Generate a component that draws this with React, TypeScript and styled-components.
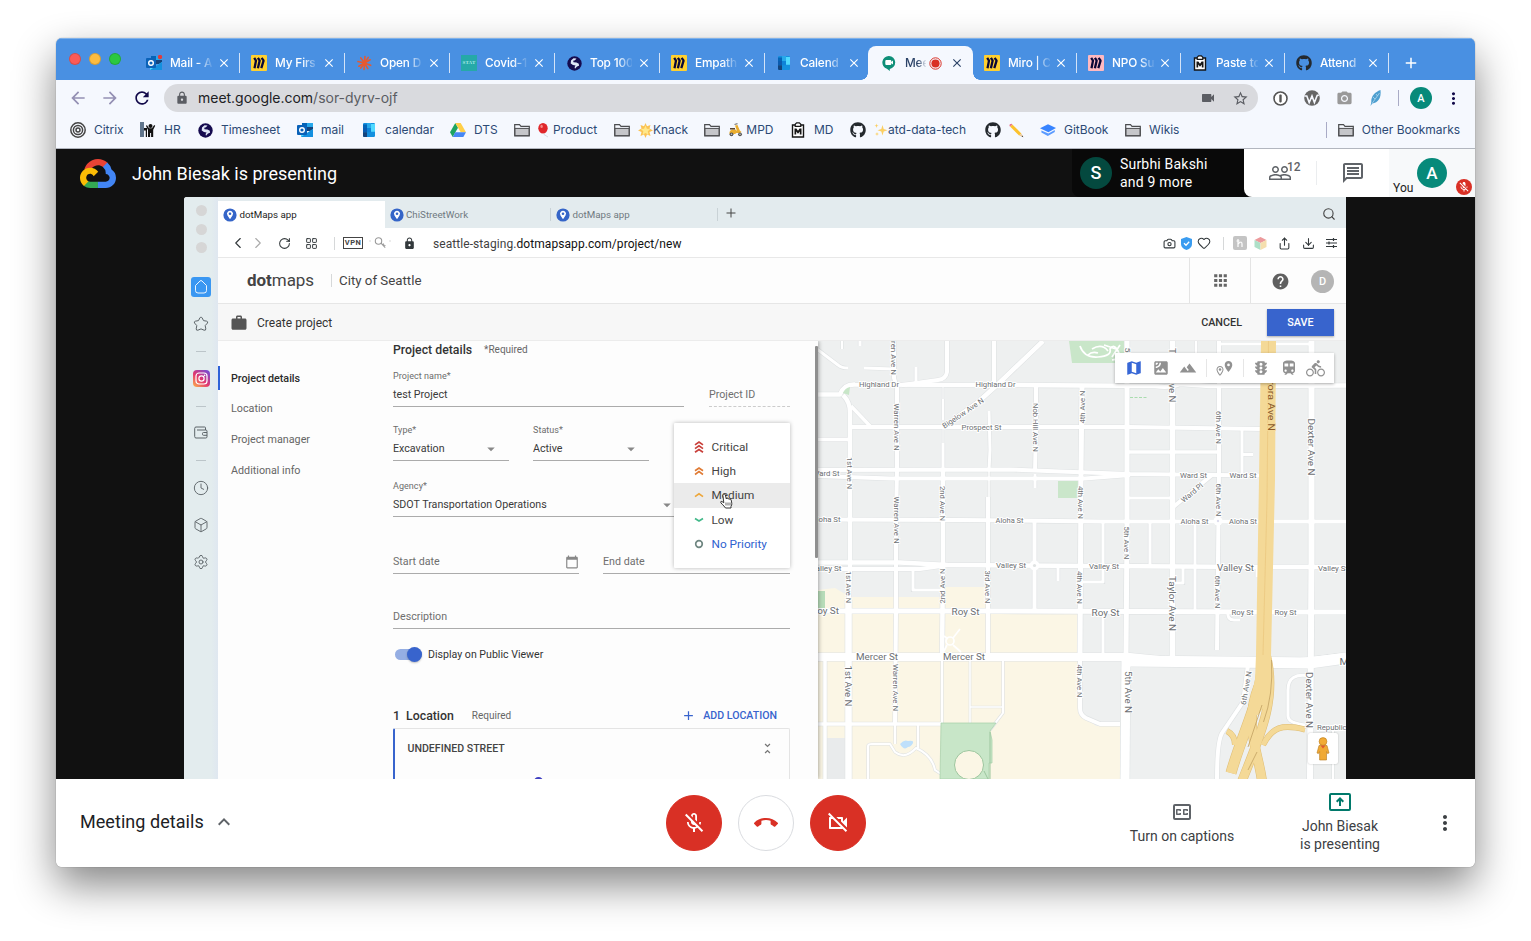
import React from "react";
import styled, { createGlobalStyle, css } from "styled-components";
import {
  MdMicOff, MdCallEnd, MdOutlineVideocamOff, MdOutlineMicOff, MdPeopleOutline, MdOutlineMessage,
  MdOutlineClosedCaption, MdLock, MdStarBorder, MdVideocam, MdHelp, MdApps, MdWork, MdMap,
  MdTerrain, MdSatellite, MdTraffic, MdTrain, MdDirectionsBike, MdArrowDropDown, MdAdd,
  MdUnfoldLess, MdCalendarToday, MdMoreVert, MdArrowBack, MdArrowForward, MdRefresh,
  MdExpandLess, MdClose, MdPhotoCamera, MdOutlineLocationOn, MdLocationOn,
} from "react-icons/md";
import { FaGithub } from "react-icons/fa";
import { Camera, Heart, Share, Download, Search, Plus, ChevronLeft, ChevronRight, RotateCw, LayoutGrid, Clock4, Box, Settings } from "lucide-react";

const Global = createGlobalStyle`
  *{box-sizing:border-box}
  html,body{margin:0;padding:0;background:#fff;overflow:hidden}
  svg{display:block;flex:none}
`;
const ui = `Inter, "Liberation Sans", sans-serif`;
const rb = `Roboto, "Liberation Sans", sans-serif`;

const Desktop = styled.main`width:1531px;height:941px;padding:38px 56px 0;background:#fff;overflow:hidden;`;
const Window = styled.section`
  width:1419px;height:829px;border-radius:6px;overflow:hidden;background:#fff;display:flex;flex-direction:column;
  box-shadow:0 0 1px rgba(0,0,0,.55),0 18px 42px rgba(0,0,0,.48);
`;

/* ---------- browser chrome ---------- */
const TabStrip = styled.header`height:42px;background:#4990e2;display:flex;border-top:1px solid #7fb1ea;font:500 12px/16px ${ui};color:#fff;`;
const Lights = styled.div`width:79px;padding:14px 0 0 13px;display:flex;gap:8px;`;
const Light = styled.i<{ $c: string }>`width:12px;height:12px;border-radius:50%;background:${p => p.$c};border:1px solid rgba(0,0,0,.15);`;
const TabBox = styled.div<{ $w: number; $active?: boolean; $line?: boolean }>`
  position:relative;width:${p => p.$w}px;height:41px;padding:7px 0 0 11px;display:flex;align-items:center;
  color:${p => (p.$active ? "#2c4368" : "#fff")};
  ${p => p.$line && css`&::after{content:"";position:absolute;right:0;top:14px;width:1px;height:20px;background:#d3e3f8;}`}
  ${p => p.$active && css`
    &::before{content:"";position:absolute;left:-2px;right:0;top:7px;bottom:0;background:#f5f8fe;border-radius:8px 8px 0 0;}
    &::after{content:"";position:absolute;left:-9px;right:-7px;bottom:0;height:7px;
      background:radial-gradient(circle at 0 0,transparent 6.5px,#f5f8fe 7px) left/7px 7px no-repeat,
      radial-gradient(circle at 100% 0,transparent 6.5px,#f5f8fe 7px) right/7px 7px no-repeat;}
  `}
  & > *{position:relative;z-index:1}
`;
const Fav = styled.span`width:16px;height:16px;display:flex;align-items:center;justify-content:center;flex:none;`;
const TabName = styled.span<{ $w: number }>`
  width:${p => p.$w}px;margin-left:8px;overflow:hidden;white-space:nowrap;font-size:11.8px;letter-spacing:-.15px;
  mask-image:linear-gradient(90deg,#000 ${p => (p.$w < 30 ? 60 : 66)}%,rgba(0,0,0,.1) 100%);
`;
const TabClose = styled(MdClose)`margin-left:auto;margin-right:9px;width:14px;height:14px;`;
const NewTab = styled(MdAdd)`width:18px;height:18px;margin:15px 0 0 13px;`;

const Toolbar = styled.div`height:36px;background:#f5f8fe;display:flex;align-items:center;padding:0 0 0 12px;color:#9490b4;`;
const NavIcon = styled.span<{ $c?: string }>`width:32px;display:flex;color:${p => p.$c || "#9490b4"};`;
const Omni = styled.div`
  width:1094px;height:28px;border-radius:14px;background:#d9dade;display:flex;align-items:center;padding:0 0 0 11px;
  font:400 14px/20px ${ui};color:#5b5d63;
`;
const Url = styled.span`margin-left:9px;letter-spacing:-.02px;flex:1;b{font-weight:400;color:#202124}`;
const Exts = styled.div`display:flex;align-items:center;margin-left:6px;color:#666;`;
const ExtSep = styled.i<{ $m?: string }>`width:1px;height:16px;background:#a9abc6;margin:${p => p.$m || "0"};`;
const Avatar = styled.span<{ $s: number; $c: string; $f: number }>`
  width:${p => p.$s}px;height:${p => p.$s}px;border-radius:50%;background:${p => p.$c};color:#fff;flex:none;
  display:flex;align-items:center;justify-content:center;font:500 ${p => p.$f}px/1 ${rb};
`;
const Bookmarks = styled.nav`height:33px;background:#f5f8fe;border-bottom:1px solid #b2b6bf;display:flex;align-items:center;padding:0 15px 4px 14px;font:400 12px/16px ${ui};color:#2c4a75;`;
const Bm = styled.span<{ $w?: number }>`width:${p => (p.$w ? p.$w + "px" : "auto")};display:flex;align-items:center;gap:8px;white-space:nowrap;`;
const BmText = styled.span`display:flex;align-items:center;letter-spacing:-.04px;`;
const BmOther = styled.div`margin-left:auto;display:flex;align-items:center;gap:11px;`;

const Miro = ({ bg = "#ffd02f" }: { bg?: string }) => (
  <svg width="16" height="16" viewBox="0 0 16 16"><rect width="16" height="16" rx="1" fill={bg} />
    <path d="M3.2 2.8L5 5.600 3.500 13.200M6.900 2.800L8.700 5.600 6.900 13.200M10.600 2.800L12.600 5.600 10.300 13.200" fill="none" stroke="#0a0838" strokeWidth="2.300" strokeLinejoin="bevel" /></svg>
);
const Outlook = ({ badge }: { badge?: boolean }) => (
  <svg width="17" height="16" viewBox="0 0 17 16"><path d="M5 1h11v8H5z" fill="#28a8ea" /><path d="M5 1h5v4H5z" fill="#0364b8" /><path d="M10 5h6v4h-6z" fill="#14447d" /><path d="M4 7l6 4 6-4v8H4z" fill="#50d9ff" /><path d="M4 15l12-8v8z" fill="#1490df" />
    <rect x="0" y="3" width="10" height="10" rx="1" fill="#0a62b8" /><circle cx="5" cy="8" r="2.300" fill="none" stroke="#fff" strokeWidth="1.400" />{badge && <circle cx="14" cy="2" r="2.200" fill="#e33b3b" />}</svg>
);
const Cal = () => (
  <svg width="12" height="14" viewBox="0 0 14 15" preserveAspectRatio="none"><rect width="14" height="15" rx="1.400" fill="#1490df" /><path d="M0 1.500h4.700v3.800H0z" fill="#0364b8" /><path d="M4.700 0h4.600v5.300H4.700z" fill="#28a8ea" /><path d="M9.300 1h4.700v8.500H9.300z" fill="#50d9ff" /><path d="M0 5.300h4.700v4.600H0z" fill="#0a5bb0" /><path d="M0 9.900h4.700V15H1.400Q0 15 0 13.600z" fill="#14447d" /><path d="M4.700 5.300h4.600v4.600H4.700z" fill="#0f83d8" /></svg>
);
const Globe = () => (
  <svg width="15" height="15" viewBox="0 0 15 15"><circle cx="7.500" cy="7.500" r="7.200" fill="#150b4f" /><path d="M4 4.500l2.500-2.300 3 .3L8 4.200l-1.800.6.3 1.400 3 .4 2.300 1.200.2 2-2 .8-2 2.200-.4-1.800 1-1.400-2.600-.6-2.300-1.600z" fill="#dfe6f7" /></svg>
);
const Clip = () => (
  <svg width="14" height="16" viewBox="0 0 14 16"><path d="M1.500 3h11v12H1.500z" fill="#fff" stroke="#151515" strokeWidth="1.400" /><path d="M4.200 4.400V2.300L5.600.9h2.800l1.400 1.400v2.100z" fill="#fff" stroke="#151515" strokeWidth="1.200" /><path d="M3.500 12.500V6.500h1.900L7 8.700l1.600-2.200h1.900v6H8.800V9.600L7 11.800 5.200 9.600v2.900z" fill="#151515" /></svg>
);
const Folder = () => (
  <svg width="16" height="14" viewBox="0 0 16 14"><path d="M.7 12.800V1.700h4.800L7 3.400h8.300v9.400z" fill="none" stroke="#4c4d50" strokeWidth="1.200" /><path d="M1 5.400h14v7.200H1z" fill="#c5c6ca" stroke="#4c4d50" strokeWidth="1" /></svg>
);
const Burst = () => (
  <svg width="15" height="16" viewBox="0 0 16 16" stroke="#e8592f" strokeWidth="1.700" strokeLinecap="round"><path d="M8.500 1L8 8 7.500 15M1 6.500L8 8l6.500 2.500M14 4.500L8 8 2 11.500M4 2.500L8 8l3.500 6M12 2L8 8 4 13.500" fill="none" /></svg>
);
const StatBox = styled.span`width:16px;height:16px;background:#25a9a8;color:#a5e8e5;font:700 5px/16px "Liberation Serif",serif;text-align:center;letter-spacing:.2px;`;
const MeetFav = () => (
  <svg width="14" height="15" viewBox="0 0 14 15"><path d="M7 0a6.500 6.500 0 0 1 .8 12.900V15L4.900 12.700A6.500 6.500 0 0 1 7 0z" fill="#0f8f78" /><rect x="3.300" y="4" width="6" height="5" rx="1" fill="#fff" /><path d="M9 6l2-1.600v4.200L9 7z" fill="#fff" /></svg>
);
const Rec = () => (
  <svg width="13" height="13" viewBox="0 0 13 13"><circle cx="6.500" cy="6.500" r="5.700" fill="none" stroke="#d93025" strokeWidth="1" /><circle cx="6.500" cy="6.500" r="4.100" fill="#d93025" /></svg>
);
const Citrix = () => (
  <svg width="16" height="16" viewBox="0 0 16 16" fill="none" stroke="#454545"><circle cx="8" cy="8" r="7.200" strokeWidth="1.500" /><circle cx="8" cy="8" r="4.600" strokeWidth="1.500" /><circle cx="8" cy="8" r="2" strokeWidth="1.500" /></svg>
);
const Hr = () => (
  <svg width="16" height="16" viewBox="0 0 16 16"><path d="M0 0h4v15H0z" fill="#60758c" /><path d="M4 6h3v9H5.800V8.500H4z" fill="#111" /><circle cx="10.500" cy="4" r="2" fill="#111" /><path d="M6.800 3l2.200 3.200h3L14.200 3l1 .8-2 4V15h-2.100v-4h-1v4H8V8L6 4z" fill="#111" /></svg>
);
const Drive = () => (
  <svg width="16" height="14" viewBox="0 0 16 14"><path d="M5.300 0L0 9.300 2.700 14 8 4.700z" fill="#1da462" /><path d="M5.300 0h5.400L16 9.300h-5.300z" fill="#ffcf48" /><path d="M5.300 9.300H16L13.300 14H2.700z" fill="#4687f4" /></svg>
);
const GitBook = () => (
  <svg width="16" height="13" viewBox="0 0 16 13"><path d="M0 4.300L8 .3l8 3.600-7.600 4.300z" fill="#3884ff" /><path d="M1.400 6.600v1.800l6.400 3.700 7-4V6l-6.400 3.500z" fill="#5b9bff" /></svg>
);
const Balloon = () => <svg width="15" height="15" viewBox="0 0 15 15"><ellipse cx="5" cy="5.300" rx="4.700" ry="5.300" fill="#e0272b" /><ellipse cx="3.600" cy="3.400" rx="1.200" ry="1.600" fill="#f58a87" /><path d="M5 10.500l1 1 4 2.500" stroke="#c9ccd4" strokeWidth=".7" fill="none" /></svg>;
const Glow = () => <svg width="15" height="15" viewBox="0 0 15 15"><path d="M7.500 0l1.500 3.300L12.500 2l-1 3.500 3.500 2-3.500 1.500 1 4-3.500-1.500L7.500 15 6 11.500 2.500 13l1-4L0 7.500l3.500-2-1-3.500L6 3.300z" fill="#fbc354" /><path d="M7.500 2.500l1.400 3.300 3.400.3-2.500 2.200.8 3.400-3.100-1.800-3 1.800.8-3.400L2.800 6.100l3.300-.3z" fill="#ffe88a" /></svg>;
const Scooter = () => <svg width="15" height="14" viewBox="0 0 15 14"><path d="M7 2.500l2.500-.5 2.300 5.500 1.700 1.500-1.500 1H8.500L7 11H1.500q-.5-3.500 2.500-4.500h3.500L9 8z" fill="#e9ad2f" /><path d="M2 5h5v1.600H2z" fill="#5a4634" /><path d="M6.500 1.500l3-.8" stroke="#777" strokeWidth="1.200" /><circle cx="3.500" cy="11.300" r="1.900" fill="#555" /><circle cx="12" cy="11.300" r="1.900" fill="#555" /><circle cx="3.500" cy="11.300" r=".8" fill="#ccc" /><circle cx="12" cy="11.300" r=".8" fill="#ccc" /></svg>;
const Sparkle = () => <svg width="14" height="14" viewBox="0 0 14 14" fill="#fbcf63"><path d="M8.500 2l1.200 4L13.500 7.300 9.700 8.600l-1.200 4-1.200-4L3.500 7.300 7.300 6z" /><path d="M2.500.5l.5 1.700 1.500.5-1.500.5-.5 1.700L2 3.200.5 2.700 2 2.200zM3 9l.5 1.500 1.500.5-1.500.5L3 13l-.5-1.500L1 11l1.500-.5z" /></svg>;
const Pencil = () => <svg width="15" height="15" viewBox="0 0 15 15"><path d="M3.300 1.400l9 9-2.200 2.200-9-9z" fill="#fcc22d" /><path d="M3.300 1.400L1.100 3.600.4 2.900Q.200.600 2.600.7z" fill="#e8728c" /><path d="M12.300 10.400L14.300 14.300 10.100 12.600z" fill="#e9c79a" /><path d="M13.500 12.600l.8 1.700-1.700-.7z" fill="#333" /></svg>;
const Feather = () => <svg width="12" height="16" viewBox="0 0 12 16"><path d="M10.500 0C5 2 1 6 1.300 12L.5 16l1.800-2.500C8 13 11.500 8 10.500 0z" fill="#4d9fd0" /><path d="M9.500 3L2 13.500M3 7l2 2M6 4l1.500 2" stroke="#bfe0f2" strokeWidth=".7" /></svg>;
const OnePw = () => <svg width="15" height="15" viewBox="0 0 15 15"><circle cx="7.500" cy="7.500" r="6.500" fill="#fff" stroke="#555" strokeWidth="1.600" /><rect x="6.300" y="3.600" width="2.400" height="7.800" rx=".8" fill="#555" /></svg>;
const WIcon = () => <svg width="16" height="16" viewBox="0 0 16 16"><circle cx="8" cy="8" r="7.800" fill="#666" /><path d="M.5 6h2.300l2.400 6.500L8 6l2.400 6.500L13.200 5.500l1.600-.5" fill="none" stroke="#f5f8fe" strokeWidth="1.600" /></svg>;

/* ---------- Meet ---------- */
const MeetTop = styled.div`height:48px;background:#111;display:flex;align-items:center;padding-left:24px;color:#fff;`;
const MeetTitle = styled.h1`margin:2px 0 0 16px;font:400 18px/24px ${rb};`;
const Speaker = styled.div`
  margin-left:auto;width:172px;height:48px;background:#090909;border-radius:0 0 0 8px;display:flex;align-items:center;gap:8px;padding-left:8px;
  font:400 14px/18px ${rb};letter-spacing:.2px;
`;
const TopActions = styled.div`position:relative;width:145px;height:48px;background:#fff;border-bottom-left-radius:8px;display:flex;align-items:center;color:#5f6368;box-shadow:-8px 0 0 -0px #090909;`;
const TopBtn = styled.span`width:72px;display:flex;justify-content:center;position:relative;`;
const Count = styled.span`position:absolute;left:43px;top:-1px;font:500 12px/14px ${rb};`;
const You = styled.div`position:relative;width:86px;height:48px;background:#f7f9fa;font:400 12px/14px ${rb};color:#222;padding:32px 0 0 4px;letter-spacing:.1px;`;
const YouAvatar = styled.div`position:absolute;left:28px;top:9px;`;
const MuteBadge = styled.span`position:absolute;right:3px;bottom:2px;width:16px;height:16px;border-radius:50%;background:#d93025;color:#fff;display:flex;align-items:center;justify-content:center;`;
const Stage = styled.div`height:582px;background:#111;padding:0 129px 0 128px;display:flex;`;
const Footer = styled.footer`height:88px;background:#fff;display:grid;grid-template-columns:1fr 200px 1fr;align-items:center;font:400 14px/18px ${rb};color:#3c4043;`;
const Details = styled.div`padding-left:24px;display:flex;align-items:center;gap:8px;font:400 18px/24px ${rb};letter-spacing:.05px;color:#202124;margin-top:-3px;svg{color:#5f6368}`;
const Calls = styled.div`display:flex;gap:16px;`;
const Call = styled.button<{ $red?: boolean }>`
  width:56px;height:56px;border-radius:50%;border:1px solid ${p => (p.$red ? "#d93025" : "#dadce0")};background:${p => (p.$red ? "#d93025" : "#fff")};
  color:${p => (p.$red ? "#fff" : "#d93025")};display:flex;align-items:center;justify-content:center;padding:0;
`;
const FootRight = styled.div`display:flex;justify-content:flex-end;align-items:center;padding-right:13px;`;
const FootItem = styled.div<{ $w: number; $gap: number; $up?: number }>`width:${p => p.$w}px;display:flex;flex-direction:column;align-items:center;gap:${p => p.$gap}px;text-align:center;letter-spacing:0;margin-top:${p => -(p.$up || 0)}px;`;

/* ---------- shared browser window ---------- */
const Shared = styled.div`width:1162px;height:582px;display:flex;background:#fff;overflow:hidden;border-top-left-radius:3px;font-family:${rb};`;
const OperaSide = styled.aside`width:34px;background:linear-gradient(90deg,#e3ecee 80%,#dfe7f0);display:flex;flex-direction:column;align-items:center;padding-top:8px;color:#5c6468;`;
const SideItem = styled.span<{ $mt: number }>`margin-top:${p => p.$mt}px;display:flex;`;
const Dot = styled.i`width:11px;height:11px;border-radius:50%;background:#d6d6d6;margin-bottom:7.5px;flex:none;`;
const Dash = styled.i<{ $mt: number }>`margin-top:${p => p.$mt}px;width:10px;height:1px;background:#bcc5c9;flex:none;`;
const HomeTile = styled.span`width:20px;height:20px;border-radius:3px;background:#3a97f2;display:flex;align-items:center;justify-content:center;color:#fff;`;
const OperaMain = styled.div`width:1128px;display:flex;flex-direction:column;`;
const OTabs = styled.div`height:31px;background:#e3ebee;display:flex;align-items:flex-end;`;
const OTab = styled.div<{ $active?: boolean; $line?: boolean }>`
  width:166.5px;height:27px;display:flex;align-items:center;gap:2.5px;padding:0 0 0 5px;font:400 9.75px/14px ${rb};
  background:${p => (p.$active ? "#fff" : "transparent")};color:${p => (p.$active ? "#222" : "#6f797f")};
  ${p => p.$line && css`background:linear-gradient(#c9d2d6,#c9d2d6) right center/1px 13px no-repeat;`}
`;
const OPlus = styled.span`padding:0 0 8px 6px;color:#444;`;
const OSearch = styled.span`margin-left:auto;padding:0 10px 7px 0;color:#444;`;
const OBar = styled.div`height:30px;border-bottom:1px solid #e8e8e8;display:flex;align-items:center;padding:1px 4px 0 10px;color:#33393c;background:#fff;`;
const Slot = styled.span<{ $w: number; $c?: string; $mt?: number }>`width:${p => p.$w}px;display:flex;justify-content:center;flex:none;margin-top:${p => p.$mt || 0}px;${p => p.$c && `color:${p.$c};`}`;
const Vpn = styled.span`width:20px;height:12px;border:1px solid #444;margin-left:8px;font:700 7.5px/10px ${rb};text-align:center;letter-spacing:.5px;color:#444;`;
const VSep = styled.i<{ $m: string; $h?: number; $c?: string }>`width:1px;height:${p => p.$h || 13}px;background:${p => p.$c || "#d6d8d9"};margin:${p => p.$m};flex:none;`;
const OUrl = styled.span`margin:2px 0 0 12px;font:400 12px/16px ${rb};color:#3f3f3f;letter-spacing:.07px;flex:1;b{font-weight:400;color:#111}`;
const AppBar = styled.div`height:46px;border-bottom:1px solid #e6e6e6;display:flex;align-items:center;padding-left:29px;color:#444;background:#fdfdfd;`;
const Brand = styled.span`font:400 17px/20px ${rb};width:84px;margin-top:-1px;letter-spacing:-.05px;b{font-weight:700}`;
const City = styled.span`font:400 13.3px/18px ${rb};margin:1px 0 0 7px;`;
const AppsCell = styled.span`margin-left:auto;width:62px;height:45px;border:solid #e4e4e4;border-width:0 1px;display:flex;align-items:center;justify-content:center;color:#666;`;
const Account = styled.span`width:95px;display:flex;align-items:center;gap:21px;padding:1px 0 0 20px;color:#606060;`;
const PageBar = styled.div`height:37px;background:#f7f7f7;border-bottom:1px solid #ececec;display:flex;align-items:center;padding:1px 12px 0 12px;color:#555;font:400 12px/16px ${rb};`;
const PageName = styled.span`margin-left:9px;color:#333;letter-spacing:.03px;flex:1;`;
const Cancel = styled.button`border:0;background:none;font:500 10.8px/16px ${rb};color:#333;padding:0;margin-right:25px;`;
const Save = styled.button`width:67px;height:27px;border:0;background:#3864cd;color:#fff;font:500 10.8px/16px ${rb};box-shadow:0 1px 2px rgba(0,0,0,.3);padding:0;`;
const Work = styled.div`height:438px;display:flex;`;
const FormPane = styled.div`position:relative;z-index:2;width:599.5px;display:flex;background:#fdfdfd;box-shadow:1px 0 4px rgba(0,0,0,.3);clip-path:inset(0 -8px 0 0);`;
const SideNav = styled.nav`width:175px;padding-top:25px;font:400 10.75px/14px ${rb};color:#666;`;
const NavRow = styled.div<{ $on?: boolean }>`
  height:24px;margin-bottom:6.9px;padding-left:${p => (p.$on ? 11 : 13)}px;display:flex;align-items:center;
  ${p => p.$on && css`border-left:2px solid #2f62d8;padding-top:1px;font-weight:500;color:#2b2b2b;`}
`;
const Form = styled.div`width:397px;display:flex;flex-direction:column;`;
const Head = styled.h2<{ $gap?: number }>`margin:0;height:17px;display:flex;align-items:center;font:500 12.3px/16px ${rb};color:#333;small{font:400 10px/14px ${rb};margin-left:${p => p.$gap || 12}px;color:#666}`;
const Row = styled.div<{ $mt: number; $gap: number }>`display:flex;gap:${p => p.$gap}px;margin-top:${p => p.$mt}px;`;
const FieldBox = styled.label<{ $w: number; $pb: number; $dash?: boolean }>`
  width:${p => p.$w}px;display:flex;flex-direction:column;padding-bottom:${p => p.$pb}px;
  border-bottom:${p => (p.$dash ? "1px dashed #ccc" : "1px solid #ababab")};
`;
const FieldLabel = styled.span`height:15px;font:400 9px/14px ${rb};color:#6c6c6c;letter-spacing:.05px;`;
const FieldValue = styled.span<{ $hint?: boolean }>`height:22px;display:flex;align-items:center;justify-content:space-between;font:400 10.7px/14px ${rb};color:${p => (p.$hint ? "#6f6f6f" : "#3a3a3a")};svg{color:#888}`;
const ToggleRow = styled.div`display:flex;align-items:center;height:20px;margin-top:16px;padding-left:2px;font:400 10.6px/14px ${rb};color:#333;gap:6px;`;
const Toggle = styled.span`width:27px;height:11px;border-radius:6px;background:#95aee3;display:flex;justify-content:flex-end;align-items:center;
  i{width:15px;height:15px;border-radius:50%;background:#3864cd;box-shadow:0 1px 2px rgba(0,0,0,.25);flex:none}`;
const AddLoc = styled.span`margin-left:auto;margin-right:13px;display:flex;align-items:center;gap:7px;color:#3864cd;font:500 10.6px/14px ${rb};`;
const Card = styled.div`height:51px;margin-top:4px;border:1px solid #e4e4e4;border-left:2px solid #3864cd;border-bottom:0;border-radius:2px 2px 0 0;display:flex;justify-content:space-between;padding:12px 14px 0 12.5px;font:500 10.6px/16px ${rb};color:#444;position:relative;overflow:hidden;`;
const CardDot = styled.i`position:absolute;left:139px;top:48px;width:9px;height:9px;border-radius:50%;background:#3f3fc0;`;
const Scroll = styled.i`position:absolute;right:0;top:5px;width:3px;height:212px;background:#8f8f8f;border-radius:1px;z-index:2;`;
const Menu = styled.ul`position:absolute;left:456px;top:82px;width:116px;height:145px;margin:0;padding:12px 0;list-style:none;background:#fff;box-shadow:0 0 4px rgba(0,0,0,.28);border-radius:1px;z-index:3;`;
const MenuItem = styled.li<{ $on?: boolean; $c?: string }>`height:24.2px;display:flex;align-items:center;padding-left:20px;gap:7.5px;font:400 11.8px/16px ${rb};color:${p => p.$c || "#444"};background:${p => (p.$on ? "#ebebeb" : "transparent")};`;
const Pointer = styled.svg`position:absolute;left:46px;top:70px;`;
const MapPane = styled.div`position:relative;width:528.5px;overflow:hidden;`;
const MapTools = styled.div`position:absolute;left:297.5px;top:12px;width:219px;height:30px;background:#fff;box-shadow:0 1px 3px rgba(0,0,0,.3);display:flex;align-items:center;color:#919191;padding-left:5px;`;
const Peg = styled.div`position:absolute;left:490.5px;top:392px;width:30px;height:31px;background:#fff;border-radius:2px;box-shadow:0 0 2px rgba(0,0,0,.25);display:flex;align-items:center;justify-content:center;`;
const MapSvg = styled.svg`margin-left:-.5px;`;

const Chevs = ({ n, c, down }: { n: number; c: string; down?: boolean }) => (
  <svg width="10" height="14" viewBox="0 0 10 14" fill="none" stroke={c} strokeWidth="1.700">
    {Array.from({ length: n }, (_, i) => {
      const y = 7 + (i - (n - 1) / 2) * 3.7;
      return <path key={i} d={down ? `M1 ${y - 1.5}L5 ${y + 1}L9 ${y - 1.5}` : `M1 ${y + 1.6}L5 ${y - 1.2}L9 ${y + 1.6}`} />;
    })}
  </svg>
);
const PinFav = () => <svg width="14" height="14" viewBox="0 0 14 14"><circle cx="7" cy="7" r="6.600" fill="#3565c8" /><path d="M7 11.300L4.500 7.500A3 3 0 1 1 9.500 7.500z" fill="#fff" /><circle cx="7" cy="5.800" r="1.300" fill="#3565c8" /></svg>;

/* ---------- map ---------- */
type Road = [string, number];
const roads: Road[] = [
  ["M817 349L838 365Q841 368 848 368", 3], ["M864 368L894 369", 3], ["M842 341V349", 2], ["M860 341V346", 3],
  ["M894 341V378L897 388V470L896 520V612L895 724", 4],
  ["M817 394.5H840Q844 384 855 384.5L1010 385L1155 386Q1170 388 1180 384L1210 386L1346 385.5", 4.5],
  ["M916 367V384", 3], ["M947 341V372Q946 379 938 380L902 385", 4], ["M994 341V384", 4], ["M1043 341L996 386L978 402L945 426", 4.5],
  ["M843 395Q850 402 850 412V565L848.5 612V779", 4.5], ["M848.5 600V779", 6.5], ["M851 406L871 427", 3.5], ["M850 427H1130L1262 429", 4],
  ["M817 439.5H850", 3.5], ["M943 399V420", 2.5], ["M943 443V470", 3], ["M943 386V470", 1], ["M943 470V560L942 660", 4.5],
  ["M989 411L990 450L989 470", 3], ["M989 470V500", 1.5], ["M988 497V655", 4], ["M1036 386V427L1035 472", 4], ["M1035 474V488", 3],
  ["M1034.5 521V611", 4], ["M1082 386L1081 470L1080 660", 5], ["M1080 657V708Q1080 715 1086 718L1100 724H1120", 4],
  ["M1127 341V530L1126 655", 5], ["M1126 655L1125 779", 9], ["M1172.5 341V660", 5.5], ["M1196 341V362", 2.5],
  ["M1219 341V470L1217 650", 4], ["M1218 344H1312", 3],
  ["M817 470L1010 469.5L1060 471.5L1130 474L1262 475.5", 4], ["M817 476L890 478.5L1085 478.5L1130 475", 4],
  ["M817 519.5L960 520L1100 521.5H1346", 4], ["M817 562.5L900 562.5L948 565L1260 567H1346", 4.5], ["M817 569H920L948 565", 4],
  ["M913 570V590H942", 3], ["M817 611H1000L1260 612H1346", 5], ["M817 657H1130L1170 661L1300 662L1346 657", 8], ["M1130 661L1310 663L1346 658", 11],
  ["M817 724H943", 3.5], ["M825 660V779", 3.5], ["M1127 452H1219", 3.5], ["M1127 498H1172", 3], ["M1103 522V582H1082", 3], ["M1150 522V567", 3],
  ["M1195 521V612", 3], ["M1183 567V583H1173", 3], ["M1103 612V655", 3], ["M1242 430V475M1242 454.5H1253", 3], ["M1172 508L1212 475", 4],
  ["M1228 612Q1227 620 1234 620H1240", 3], ["M1257 567V577", 3], ["M1058 566V581", 3], ["M1248 665L1243 702L1222 733Q1217 742 1217 779", 4],
  ["M1311.5 341V560L1310 779", 6], ["M1310 676Q1288 672 1288 690V716Q1288 723 1305 725", 3],
  ["M942 660V723", 2], ["M970 660V723M970 707H1003", 1.5], ["M1003 660V713L990 730", 2], ["M868 779V746Q868 744 872 744H890L895 752Q905 760 916 748Q932 755 935 770L941 774", 2],
  ["M918 724V748M895 724V744", 2], ["M1333 725V779", 2],
];
type Lb = [string, number, number, number, number, number?];
const labels: Lb[] = [
  ["Highland Dr", 879, 384.5, 40, 7.5], ["Highland Dr", 995.5, 384.5, 40, 7.5], ["Prospect St", 981.5, 427.5, 40, 7.5],
  ["Bigelow Ave N", 963, 413, 48, 7.5, -34], ["ren Ave N", 893.5, 358, 34, 7.5, 90], ["Warren Ave N", 896.5, 427, 47, 7.5, 90], ["Warren Ave N", 896.5, 520, 47, 7.5, 90],
  ["Warren Ave N", 895.5, 687.5, 47, 7.5, 90], ["1st Ave N", 850, 473, 32, 7.5, 90], ["1st Ave N", 849, 587, 32, 7.5, 90], ["1st Ave N", 848.5, 686, 41, 9.5, 90],
  ["Nob Hill Ave N", 1036, 427.5, 49, 7.5, 90], ["4th Ave N", 1082, 407, 33, 7.5, -90], ["4th Ave N", 1080.5, 502.5, 33, 7.5, 90], ["4th Ave N", 1079.5, 587.5, 33, 7.5, 90], ["4th Ave N", 1079.5, 681, 33, 7.5, 90],
  ["2nd Ave N", 943, 503.5, 35, 7.5, 90], ["2nd Ave N", 942, 586, 35, 7.5, -90], ["3rd Ave N", 988, 587, 33, 7.5, 90],
  ["Vard St", 827, 473, 25, 7.5], ["Aloha St", 826, 519.5, 29, 7.5], ["Valley St", 826, 568, 31, 7.5], ["Roy St", 825, 611, 28, 9.5],
  ["Aloha St", 1009.5, 520.5, 28, 7.5], ["Valley St", 1011, 565.5, 30, 7.5], ["Roy St", 965.5, 611.5, 28, 9.5], ["Mercer St", 877, 657, 42, 9.5], ["Mercer St", 964, 657, 42, 9.5],
  ["Valley St", 1104, 566.5, 30, 7.5], ["Roy St", 1105.5, 612.5, 28, 9.5], ["Ward St", 1193.5, 475, 27, 7.5], ["Ward St", 1243, 475.5, 27, 7.5], ["Ward Pl", 1192, 492.5, 26, 7.5, -40],
  ["Aloha St", 1194.5, 521.5, 28, 7.5], ["Aloha St", 1243, 521.5, 28, 7.5], ["Valley St", 1235.5, 567.5, 37, 9.5], ["Valley St", 1333, 568, 30, 7.5], ["Roy St", 1242.5, 612.5, 22, 7.5], ["Roy St", 1285.5, 612.5, 22, 7.5],
  ["5th Ave N", 1126.5, 543, 33, 7.5, 90], ["5th Ave N", 1128.5, 692, 42, 9.5, 90], ["Taylor Ave N", 1172, 603.5, 55, 9.5, 90], ["ve N", 1172.5, 393, 19, 9, 90], ["T", 1172.5, 351, 6, 9, 90], ["5", 1128, 350, 5, 8, 90],
  ["6th Ave N", 1219, 427.5, 33, 7.5, 90], ["6th Ave N", 1218.5, 500, 33, 7.5, 90], ["6th Ave N", 1217.5, 592, 33, 7.5, 90], ["6th Ave N", 1246, 688, 34, 7.5, -80],
  ["rora Ave N", 1271.5, 406, 50, 9.5, 90], ["Dexter Ave N", 1311, 447, 57, 9.5, 90], ["Dexter Ave N", 1309.5, 700, 56, 9.5, 90], ["Republican", 1336, 727, 38, 7.5], ["Mercer", 1356, 661.5, 33, 9.5],
];
const ramps: [string, number][] = [
  ["M1263 655C1262 700 1243 730 1231 773", 10], ["M1266 655C1278 700 1258 740 1242 781", 8.5],
  ["M1259 685C1243 725 1258 750 1262 781", 9], ["M1305 729.5C1282 724 1272 727 1263 745M1227 731Q1235 735 1235 745", 5],
];
const MapArt = () => (
  <MapSvg width="529" height="438" viewBox="817 341 529 438">
    <rect x="817" y="341" width="529" height="438" fill="#eef0f0" />
    <path d="M817 590L835 588L850 597H943V587H988V612H1079V657V712L1096 726H1120V779H817z" fill="#fbf6e5" />
    <path d="M826 738H845V779H826z" fill="#e9ebec" />
    <path d="M1069 341H1125V363H1072z" fill="#c9e6c9" /><path d="M1058 480H1079V498H1058z" fill="#cae6ca" /><path d="M817 591H825V608H817z" fill="#b7dcb9" />
    {roads.map(([d, w], i) => <path key={"c" + i} d={d} fill="none" stroke="#dfe2e3" strokeWidth={w + 1.2} />)}
    {roads.map(([d, w], i) => <path key={i} d={d} fill="none" stroke="#fff" strokeWidth={w} strokeLinejoin="round" />)}
    <path d="M941 723H996L990 731L992 740V763H989V779H940z" fill="#c8e6c8" stroke="#a5cfa8" strokeWidth=".7" />
    <circle cx="969" cy="765" r="14.500" fill="#fbf6e5" stroke="#9cc69e" />
    <path d="M984 771l4 8M990 732v47" stroke="#9cc69e" fill="none" />
    <path d="M900 744q4-5 8-3 6-1 5 2-2 4-5 4-4 4-8-3z" fill="#bfe0fb" />
    <path d="M843 393q2-5 7-6l-1 8z" fill="#c8e6c8" />
    <g fill="none" stroke="#fff" strokeWidth="1.700"><path d="M1080 346q4 12 18 11t12-8q4-6 8 2t-6 9M1092 349q10-6 16 2M1104 345l12 4M1112 357l8-12M1088 355q4-4 10-2" /><circle cx="950" cy="641" r="4" /><path d="M944 636l4 3M953 638l7-9M947 645l-4 8M953 645l8 7" /></g>
    <circle cx="1034.500" cy="565.500" r="5" fill="#fff" /><circle cx="1034.500" cy="565.500" r="1.600" fill="#e0e3e3" />
    <circle cx="1218" cy="521" r="4.500" fill="#fff" /><circle cx="1218" cy="521" r="1.200" fill="#dde" />
    <path d="M1130 397.500h18" stroke="#a9dcae" strokeDasharray="3 1.500" fill="none" />
    {ramps.map(([d, w]) => <path key={d + "c"} d={d} fill="none" stroke="#dfbd74" strokeWidth={w + 1} />)}
    {ramps.map(([d, w]) => <path key={d} d={d} fill="none" stroke="#f4d997" strokeWidth={w} />)}
    <path d="M1261 341H1276L1275 480L1271 655Q1274 680 1269 700L1258 715H1248L1255 680L1256 655L1259 480z" fill="#f4d997" />
    <path d="M1268.500 341L1267 500L1263 655" stroke="#ecca82" strokeWidth=".9" fill="none" />
    <path d="M1271.500 660q2 35-8 62M1262 705l-14 42M1257 752l-9 18" stroke="#c2a162" strokeWidth=".8" fill="none" />
    {labels.map(([t, x, y, w, s, r = 0], i) => (
      <text key={i} transform={`translate(${x} ${y}) rotate(${r})`} textAnchor="middle" dy=".36em" textLength={w} lengthAdjust="spacingAndGlyphs"
        fontSize={s} fontFamily={rb} fill={t.startsWith("rora") ? "#8a5a2a" : "#6d7073"} stroke={t.startsWith("rora") ? "#f4d997" : "#fff"} strokeWidth="1.800" paintOrder="stroke">{t}</text>
    ))}
  </MapSvg>
);

type TabDef = { t: string; icon: React.ReactNode; w: number; line?: boolean };
const tabs: TabDef[] = [
  { t: "Mail - A", icon: <Outlook badge />, w: 105, line: true }, { t: "My Firs", icon: <Miro />, w: 105, line: true },
  { t: "Open D", icon: <Burst />, w: 105, line: true }, { t: "Covid-1", icon: <StatBox>STAT</StatBox>, w: 105, line: true },
  { t: "Top 100", icon: <Globe />, w: 105, line: true }, { t: "Empath", icon: <Miro />, w: 105, line: true }, { t: "Calend", icon: <Cal />, w: 105 },
];
const tabs2: TabDef[] = [
  { t: "Miro | C", icon: <Miro />, w: 104, line: true }, { t: "NPO Su", icon: <Miro bg="#ffb9c0" />, w: 104, line: true },
  { t: "Paste to", icon: <Clip />, w: 104, line: true }, { t: "Attend", icon: <FaGithub size={16} color="#24292e" />, w: 104, line: true },
];
const Tab = ({ d }: { d: TabDef }) => <TabBox $w={d.w} $line={d.line}><Fav>{d.icon}</Fav><TabName $w={42}>{d.t}</TabName><TabClose /></TabBox>;

const gh = <FaGithub size={16} color="#24292e" />;
const marks: [React.ReactNode, React.ReactNode, number][] = [
  [<Citrix />, "Citrix", 70], [<Hr />, "HR", 57], [<Globe />, "Timesheet", 100], [<Outlook />, "mail", 64], [<Cal />, "calendar", 89], [<Drive />, "DTS", 64],
  [<Folder />, <><Balloon />Product</>, 100], [<Folder />, <><Glow />Knack</>, 90], [<Folder />, <><Scooter />&nbsp;MPD</>, 86], [<Clip />, "MD", 60],
  [gh, <><Sparkle />atd-data-tech</>, 135], [gh, <Pencil />, 55], [<GitBook />, "GitBook", 85], [<Folder />, "Wikis", 60],
];

const Field = ({ w, label, value, hint, pb = 0, icon, dash }: { w: number; label?: string; value: string; hint?: boolean; pb?: number; icon?: React.ReactNode; dash?: boolean }) => (
  <FieldBox $w={w} $pb={pb} $dash={dash}><FieldLabel>{label}</FieldLabel><FieldValue $hint={hint}>{value}{icon}</FieldValue></FieldBox>
);
const Arrow = styled(MdArrowDropDown)`width:18px;height:18px;margin-right:9px;`;
const SmallArrow = styled(MdArrowDropDown)`width:18px;height:18px;margin-right:8.5px;`;

export default function App() {
  return (
    <Desktop><Global />
      <Window>
        <TabStrip>
          <Lights><Light $c="#fc5b57" /><Light $c="#fdbc40" /><Light $c="#2bc840" /></Lights>
          {tabs.map(d => <Tab key={d.t} d={d} />)}
          <TabBox $w={103} $active><Fav><MeetFav /></Fav><TabName $w={21}>Mee</TabName><Slot $w={18}><Rec /></Slot><TabClose /></TabBox>
          {tabs2.map(d => <Tab key={d.t} d={d} />)}
          <NewTab />
        </TabStrip>
        <Toolbar>
          <NavIcon><MdArrowBack size={20} /></NavIcon><NavIcon><MdArrowForward size={20} /></NavIcon><NavIcon $c="#120a4a"><MdRefresh size={20} /></NavIcon>
          <Omni><MdLock size={14} /><Url><b>meet.google.com</b>/sor-dyrv-ojf</Url><Slot $w={28}><MdVideocam size={16} /></Slot><Slot $w={36}><MdStarBorder size={17} /></Slot></Omni>
          <Exts><Slot $w={32}><OnePw /></Slot><Slot $w={32}><WIcon /></Slot><Slot $w={32}><MdPhotoCamera size={17} color="#999" /></Slot><Slot $w={32}><Feather /></Slot></Exts>
          <ExtSep $m="0 11px 0 6px" /><Avatar $s={22} $c="#078a7a" $f={11}>A</Avatar><Slot $w={43} $c="#120a4a"><MdMoreVert size={19} /></Slot>
        </Toolbar>
        <Bookmarks>
          {marks.map(([ic, t, w], i) => <Bm key={i} $w={w}><Fav>{ic}</Fav><BmText>{t}</BmText></Bm>)}
          <BmOther><ExtSep /><Bm><Fav><Folder /></Fav><BmText>Other Bookmarks</BmText></Bm></BmOther>
        </Bookmarks>

        <MeetTop>
          <svg width="36" height="29" viewBox="0 0 256 206">
            <path d="M170.252 56.819l22.253-22.253 1.483-9.370C153.437-11.677 88.976-7.496 52.420 33.920 42.267 45.423 34.734 59.764 30.717 74.573l7.970-1.123 44.505-7.340 3.436-3.513c19.797-21.742 53.270-24.667 76.128-6.168l7.496.390z" fill="#EA4335" />
            <path d="M224.205 73.918a100.249 100.249 0 0 0-30.217-48.722l-31.232 31.232a55.515 55.515 0 0 1 20.379 44.037v5.544c15.350 0 27.797 12.445 27.797 27.796 0 15.352-12.446 27.485-27.797 27.485h-55.671l-5.466 5.934v33.340l5.466 5.231h55.670c39.930.311 72.553-31.494 72.864-71.424a72.303 72.303 0 0 0-31.793-60.453" fill="#4285F4" />
            <path d="M71.870 205.796h55.593V161.290H71.870a27.275 27.275 0 0 1-11.400-2.498l-7.887 2.420-22.409 22.253-1.952 7.574a71.850 71.850 0 0 0 43.648 14.757" fill="#34A853" />
            <path d="M71.870 61.425C31.940 61.664-.237 94.228.001 134.158a72.301 72.301 0 0 0 28.222 56.880l32.248-32.246c-13.990-6.322-20.208-22.786-13.887-36.776 6.320-13.990 22.786-20.208 36.775-13.888a27.796 27.796 0 0 1 13.887 13.888l32.248-32.248A72.224 72.224 0 0 0 71.870 61.425" fill="#FBBC05" />
          </svg>
          <MeetTitle>John Biesak is presenting</MeetTitle>
          <Speaker><Avatar $s={32} $c="#04493f" $f={18}>S</Avatar><span>Surbhi Bakshi<br />and 9 more</span></Speaker>
          <TopActions><TopBtn><MdPeopleOutline size={24} /><Count>12</Count></TopBtn><VSep $m="0" $h={24} $c="#ebedef" /><TopBtn><MdOutlineMessage size={24} /></TopBtn></TopActions>
          <You>You<YouAvatar><Avatar $s={30} $c="#078a7a" $f={17}>A</Avatar></YouAvatar><MuteBadge><MdMicOff size={12} /></MuteBadge></You>
        </MeetTop>

        <Stage><Shared>
          <OperaSide>
            <Dot /><Dot /><Dot />
            <SideItem $mt={16}><HomeTile><svg width="16" height="16" viewBox="0 0 16 16" fill="none" stroke="#fff" strokeWidth=".9"><path d="M2.500 6.500L7 2q1-1 2 0l4.500 4.500v5q0 2.500-2.500 2.500H5q-2.500 0-2.500-2.500z" /></svg></HomeTile></SideItem>
            <SideItem $mt={19}><svg width="16" height="16" viewBox="0 0 16 16" fill="none" stroke="currentColor" strokeLinejoin="round"><path d="M8 1.200q.8 0 1.200.8L10.500 4.600l3.200.6q1.700.5.700 1.900L12.200 9.600l.6 3.300q0 1.800-1.700 1.300L8 12.900l-3.100 1.300q-1.700.5-1.700-1.300l.6-3.300L1.600 7.100q-1-1.400.7-1.900l3.200-.6L6.800 2Q7.200 1.200 8 1.200z" /></svg></SideItem>
            <Dash $mt={19} />
            <SideItem $mt={18}><svg width="17" height="17" viewBox="0 0 17 17"><defs><linearGradient id="ig" x1="0" y1="1" x2=".8" y2="0"><stop offset="0" stopColor="#fdb54a" /><stop offset=".5" stopColor="#e2366f" /><stop offset="1" stopColor="#7a4bd0" /></linearGradient></defs><rect width="17" height="17" rx="4" fill="url(#ig)" /><g fill="none" stroke="#fff" strokeWidth="1.200"><rect x="3" y="3" width="11" height="11" rx="3" /><circle cx="8.500" cy="8.500" r="2.600" /></g><circle cx="11.600" cy="5.400" r=".8" fill="#fff" /></svg></SideItem>
            <Dash $mt={19} />
            <SideItem $mt={19}><svg width="14" height="14" viewBox="0 0 14 14" fill="none" stroke="currentColor"><path d="M11.500 4V1.800q0-.8-.8-.8H2Q.7 1 .7 2.400v8.200Q.7 12 2 12h9.800q1.200 0 1.200-1.200V5.200Q13 4 11.800 4H3M13 6.500H9.500q-1 0-1 1v.8q0 1 1 1H13" /></svg></SideItem>
            <Dash $mt={20} />
            <SideItem $mt={19}><Clock4 size={16} strokeWidth={1.4} /></SideItem>
            <SideItem $mt={21}><Box size={16} strokeWidth={1.4} /></SideItem>
            <SideItem $mt={21}><Settings size={16} strokeWidth={1.4} /></SideItem>
          </OperaSide>
          <OperaMain>
            <OTabs>
              <OTab $active><PinFav />dotMaps app</OTab><OTab $line><PinFav />ChiStreetWork</OTab><OTab $line><PinFav />dotMaps app</OTab>
              <OPlus><Plus size={14} strokeWidth={1.7} /></OPlus><OSearch><Search size={14} strokeWidth={1.9} /></OSearch>
            </OTabs>
            <OBar>
              <Slot $w={19}><ChevronLeft size={18} strokeWidth={1.5} /></Slot><Slot $w={21} $c="#aaa"><ChevronRight size={18} strokeWidth={1.5} /></Slot>
              <Slot $w={32}><RotateCw size={13} strokeWidth={1.9} /></Slot><Slot $w={22}><LayoutGrid size={13} strokeWidth={1.8} /></Slot>
              <VSep $m="0 0 0 12px" /><Vpn>VPN</Vpn>
              <Slot $w={34} $c="#999"><svg width="22" height="12" viewBox="0 0 22 12" fill="none" stroke="currentColor"><circle cx="9.500" cy="4" r="3.200" strokeWidth="1.100" /><path d="M12 6.200l4.300 4.300M13.500 8l1.500-1.300M15 9.500l1.300-1.200" strokeWidth="1.200" /><path d="M.5 4h1M20.500 4h1" strokeWidth="1.500" stroke="#ccc" /></svg></Slot>
              <Slot $w={24}><MdLock size={13} /></Slot>
              <OUrl>seattle-staging.<b>dotmapsapp.com/project/new</b></OUrl>
              <Slot $w={18}><Camera size={13} /></Slot>
              <Slot $w={17}><svg width="11" height="13" viewBox="0 0 11 13"><path d="M5.500 0L11 2v5q0 4-5.500 6Q0 11 0 7V2z" fill="#3a9cf0" /><path d="M3 6.300l2 2 3.200-3.600" stroke="#fff" strokeWidth="1.300" fill="none" /></svg></Slot>
              <Slot $w={18}><Heart size={14} strokeWidth={1.8} /></Slot><VSep $m="0 7px 0 10px" />
              <Slot $w={18}><svg width="14" height="14" viewBox="0 0 14 14"><rect width="14" height="14" rx="2" fill="#c4c4c4" /><path d="M5 3v8M5 8q4-4 4 0v3M3.500 5h3" stroke="#fff" strokeWidth="1.200" fill="none" /></svg></Slot>
              <Slot $w={23}><svg width="13" height="13" viewBox="0 0 13 13"><path d="M6.500 0L12.500 3 6.500 6 .500 3z" fill="#ec9a9c" /><path d="M.5 3L6.500 6v7L.5 10z" fill="#aee0c8" /><path d="M12.500 3L6.500 6v7l6-3z" fill="#f5dfae" /></svg></Slot>
              <Slot $w={24}><Share size={13} /></Slot><Slot $w={24}><Download size={13} /></Slot>
              <Slot $w={22}><svg width="11" height="10" viewBox="0 0 11 10" stroke="currentColor" strokeWidth="1.200"><path d="M0 1.500h11M0 5h11M0 8.500h11M7.500 0v3M3 3.500v3M7.500 7v3" /></svg></Slot>
            </OBar>
            <AppBar>
              <Brand><b>dot</b>maps</Brand><VSep $m="0" /><City>City of Seattle</City>
              <AppsCell><MdApps size={19} /></AppsCell>
              <Account><MdHelp size={19} /><Avatar $s={23} $c="#b5b5b5" $f={11}>D</Avatar></Account>
            </AppBar>
            <PageBar><MdWork size={18} /><PageName>Create project</PageName><Cancel>CANCEL</Cancel><Save>SAVE</Save></PageBar>
            <Work>
              <FormPane>
                <SideNav><NavRow $on>Project details</NavRow><NavRow>Location</NavRow><NavRow>Project manager</NavRow><NavRow>Additional info</NavRow></SideNav>
                <Form>
                  <Head>Project details<small>*Required</small></Head>
                  <Row $mt={11} $gap={25}><Field w={291} label="Project name*" value="test Project" /><Field w={81} value="Project ID" hint dash /></Row>
                  <Row $mt={15.5} $gap={24}><Field w={116} label="Type*" value="Excavation" pb={.5} icon={<Arrow />} /><Field w={116} label="Status*" value="Active" pb={.5} icon={<Arrow />} /></Row>
                  <Row $mt={17.5} $gap={0}><Field w={291} label="Agency*" value="SDOT Transportation Operations" pb={.5} icon={<SmallArrow />} /></Row>
                  <Row $mt={18.5} $gap={24}><Field w={186} value="Start date" hint icon={<MdCalendarToday size={14} />} /><Field w={187} value="End date" hint /></Row>
                  <Row $mt={17} $gap={0}><Field w={397} value="Description" hint /></Row>
                  <ToggleRow><Toggle><i /></Toggle>Display on Public Viewer</ToggleRow>
                  <Row $mt={42.5} $gap={0}><Head $gap={18}>1&nbsp; Location<small>Required</small></Head><AddLoc><MdAdd size={15} />ADD LOCATION</AddLoc></Row>
                  <Card>UNDEFINED STREET<MdUnfoldLess size={15} color="#777" /><CardDot /></Card>
                </Form>
                <Scroll />
                <Menu>
                  <MenuItem><Chevs n={3} c="#c9413c" />Critical</MenuItem><MenuItem><Chevs n={2} c="#e07b35" />High</MenuItem>
                  <MenuItem $on><Chevs n={1} c="#eda73c" />Medium</MenuItem><MenuItem><Chevs n={1} c="#43b98a" down />Low</MenuItem>
                  <MenuItem $c="#2f62cf"><svg width="10" height="10" viewBox="0 0 10 10"><circle cx="5" cy="5" r="3.300" fill="none" stroke="#6f8681" strokeWidth="1.700" /></svg>No Priority</MenuItem>
                  <Pointer width="13" height="16" viewBox="0 0 13 16"><path d="M3.600 1.200q1.200-.6 1.700.6l1 4.200.6-.8q1-.3 1.300.7.900-.6 1.500.4 1.200-.4 1.500.7l.6 3.300q.2 1.800-.8 3L11 15H5.500q-1.300-2-3.300-3.700Q.200 9.500.8 8.700q.9-.8 2.200.5l.8.600L2.900 2.400q-.1-.8.700-1.200z" fill="#fff" stroke="#222" strokeWidth=".9" /><path d="M6 9.500v3M8 9.500v3M10 9.500v3" stroke="#222" strokeWidth=".7" /></Pointer>
                </Menu>
              </FormPane>
              <MapPane><MapArt />
                <MapTools>
                  <Slot $w={27} $c="#3767d6"><MdMap size={18} /></Slot><Slot $w={27}><MdSatellite size={18} /></Slot><Slot $w={28}><MdTerrain size={18} /></Slot><VSep $m="0 8px 0 4px" $h={18} $c="#e6e6e6" />
                  <Slot $w={9} $mt={5}><MdOutlineLocationOn size={12} /></Slot><Slot $w={9} $mt={-3}><MdLocationOn size={13} /></Slot><VSep $m="0 0 0 10px" $h={18} $c="#e6e6e6" />
                  <Slot $w={34}><MdTraffic size={18} /></Slot><Slot $w={21}><MdTrain size={18} /></Slot><Slot $w={33}><MdDirectionsBike size={19} /></Slot>
                </MapTools>
                <Peg><svg width="14" height="24" viewBox="0 0 14 24"><path d="M3 8.500h8L13 16l-1.500.6-1-2V23H3.600v-8.400l-1.200 2L1 16z" fill="#f0a934" stroke="#b97a1d" strokeWidth=".6" /><circle cx="7" cy="4.500" r="3.900" fill="#f2ab35" stroke="#b97a1d" strokeWidth=".6" /><path d="M4.500 8.500h5L7 11.500z" fill="#e0582f" /></svg></Peg>
              </MapPane>
            </Work>
          </OperaMain>
        </Shared></Stage>

        <Footer>
          <Details>Meeting details<MdExpandLess size={24} /></Details>
          <Calls><Call $red><MdOutlineMicOff size={24} /></Call><Call><MdCallEnd size={24} /></Call><Call $red><MdOutlineVideocamOff size={24} /></Call></Calls>
          <FootRight>
            <FootItem $w={140} $gap={3} $up={2}><MdOutlineClosedCaption size={24} color="#5f6368" />Turn on captions</FootItem>
            <FootItem $w={176} $gap={6}><svg width="22" height="18" viewBox="0 0 22 18"><rect x="1" y="1" width="20" height="16" rx="1" fill="none" stroke="#00796b" strokeWidth="2" /><path d="M11 13V6M7.700 8.800L11 5.500l3.300 3.300" fill="none" stroke="#00796b" strokeWidth="2" /></svg><span>John Biesak<br />is presenting</span></FootItem>
            <Slot $w={34}><MdMoreVert size={24} /></Slot>
          </FootRight>
        </Footer>
      </Window>
    </Desktop>
  );
}
